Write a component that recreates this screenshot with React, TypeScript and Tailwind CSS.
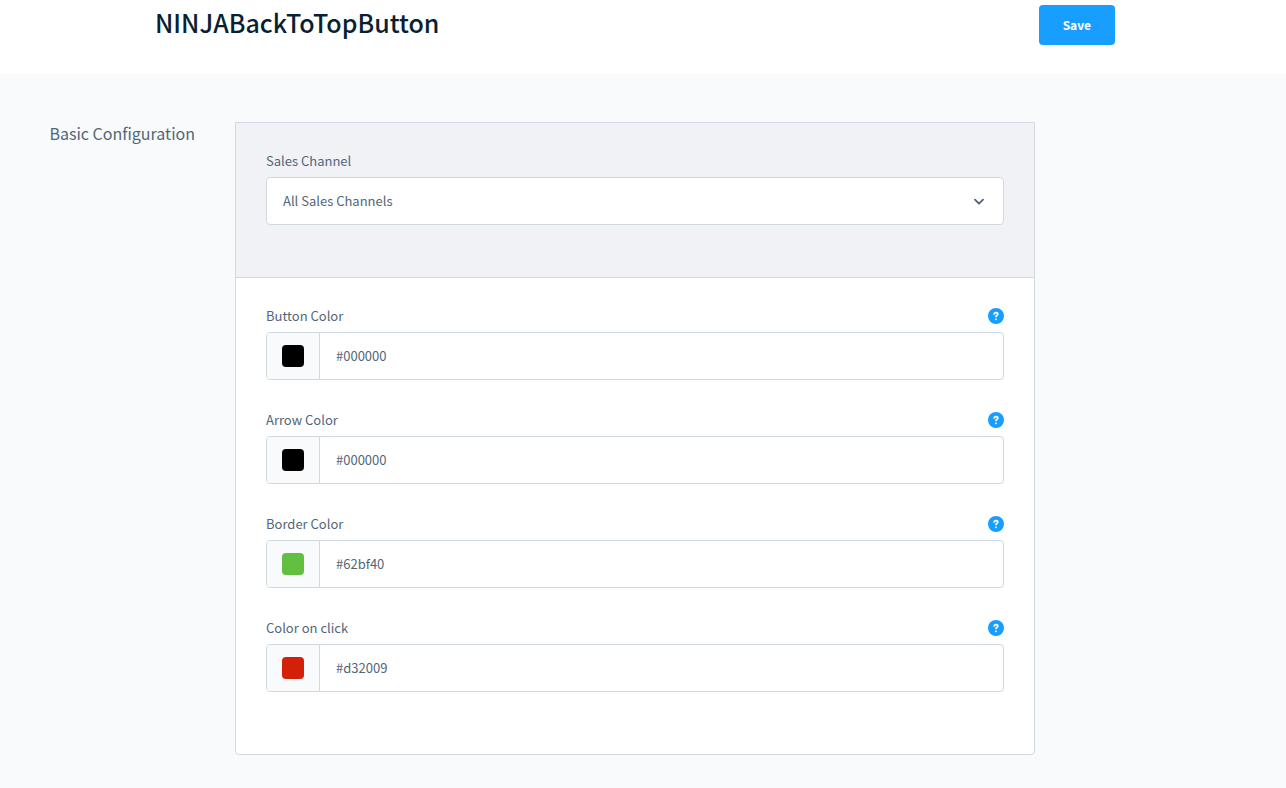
import { useState } from 'react'

type ColorField = {
  id: string
  label: string
  help: string
}

const COLOR_FIELDS: ColorField[] = [
  { id: 'buttonColor', label: 'Button Color', help: 'Help for button color' },
  { id: 'arrowColor', label: 'Arrow Color', help: 'Help for arrow color' },
  { id: 'borderColor', label: 'Border Color', help: 'Help for border color' },
  { id: 'clickColor', label: 'Color on click', help: 'Help for color on click' },
]

const INITIAL_COLORS: Record<string, string> = {
  buttonColor: '#000000',
  arrowColor: '#000000',
  borderColor: '#62bf40',
  clickColor: '#d32009',
}

function ChevronIcon() {
  return (
    <svg
      className="pointer-events-none absolute top-1/2 right-[18px] h-3 w-3 -translate-y-1/2"
      viewBox="0 0 12 12"
      fill="none"
      stroke="#52667a"
      strokeWidth="1.8"
      strokeLinecap="round"
      strokeLinejoin="round"
      aria-hidden
    >
      <path d="M1 4.7 L5 8.7 L9 4.7" />
    </svg>
  )
}

function HelpIcon() {
  return (
    <svg className="h-4 w-4" viewBox="0 0 16 16" fill="none" aria-hidden>
      <circle cx="8" cy="8" r="8" fill="#189eff" />
      <path
        d="M6.2 6.3 C6.2 5.2 6.9 4.6 8 4.6 C9.1 4.6 9.8 5.2 9.8 6.2 C9.8 7.4 8 7.3 8 8.8"
        stroke="#fff"
        strokeWidth="1.6"
        strokeLinecap="round"
      />
      <circle cx="8" cy="11.3" r="0.9" fill="#fff" />
    </svg>
  )
}

function ColorInput({
  field,
  value,
  onChange,
}: {
  field: ColorField
  value: string
  onChange: (value: string) => void
}) {
  return (
    <div className="mb-8">
      <div className="mb-2 flex h-4 items-center justify-between">
        <label htmlFor={field.id}>{field.label}</label>
        <button type="button" aria-label={field.help}>
          <HelpIcon />
        </button>
      </div>
      <div className="flex h-12 overflow-hidden rounded border border-[#d1d9e0] bg-white">
        <div className="flex shrink-0 items-center border-r border-[#d1d9e0] bg-[#f9fafb] px-[15px]">
          <button
            type="button"
            aria-label={`Pick ${field.label}`}
            className="h-[22px] w-[22px] rounded"
            style={{ backgroundColor: value }}
          />
        </div>
        <input
          id={field.id}
          type="text"
          value={value}
          onChange={(e) => onChange(e.target.value)}
          className="min-w-0 flex-1 px-4 outline-none"
        />
      </div>
    </div>
  )
}

export default function App() {
  const [colors, setColors] = useState(INITIAL_COLORS)
  const [channel, setChannel] = useState('all')

  return (
    <div className="min-h-screen bg-[#f9fafb] font-['Source_Sans_Pro','Noto_Sans_CJK_SC',sans-serif] text-[13px] leading-4 text-[#52667a]">
      <header className="bg-white pt-[5px] pr-4 pb-[29px]">
        <div className="mx-auto flex max-w-[960px] items-start justify-between">
          <h1 className="text-[25px] leading-[34px] font-medium text-[#0a1f33]">NINJABackToTopButton</h1>
          <button type="button" className="h-10 rounded bg-[#189eff] px-6 text-xs font-bold text-white">
            Save
          </button>
        </div>
      </header>

      <main className="grid grid-cols-[1fr_minmax(0,800px)_1fr] pt-12 pr-4 pb-8">
        <h2 className="pr-10 text-right text-base leading-[22px] whitespace-nowrap">Basic Configuration</h2>

        <div className="overflow-hidden rounded-b border border-[#d1d9e0] bg-white">
          <div className="border-b border-[#d1d9e0] bg-[#f0f2f5] px-[30px] pt-[30px] pb-[52px]">
            <label htmlFor="salesChannel" className="mb-2 block">
              Sales Channel
            </label>
            <div className="relative">
              <select
                id="salesChannel"
                value={channel}
                onChange={(e) => setChannel(e.target.value)}
                className="h-12 w-full appearance-none rounded border border-[#d1d9e0] bg-white px-4 outline-none"
              >
                <option value="all">All Sales Channels</option>
              </select>
              <ChevronIcon />
            </div>
          </div>

          <div className="p-[30px]">
            {COLOR_FIELDS.map((field) => (
              <ColorInput
                key={field.id}
                field={field}
                value={colors[field.id]}
                onChange={(value) => setColors({ ...colors, [field.id]: value })}
              />
            ))}
          </div>
        </div>
      </main>
    </div>
  )
}
